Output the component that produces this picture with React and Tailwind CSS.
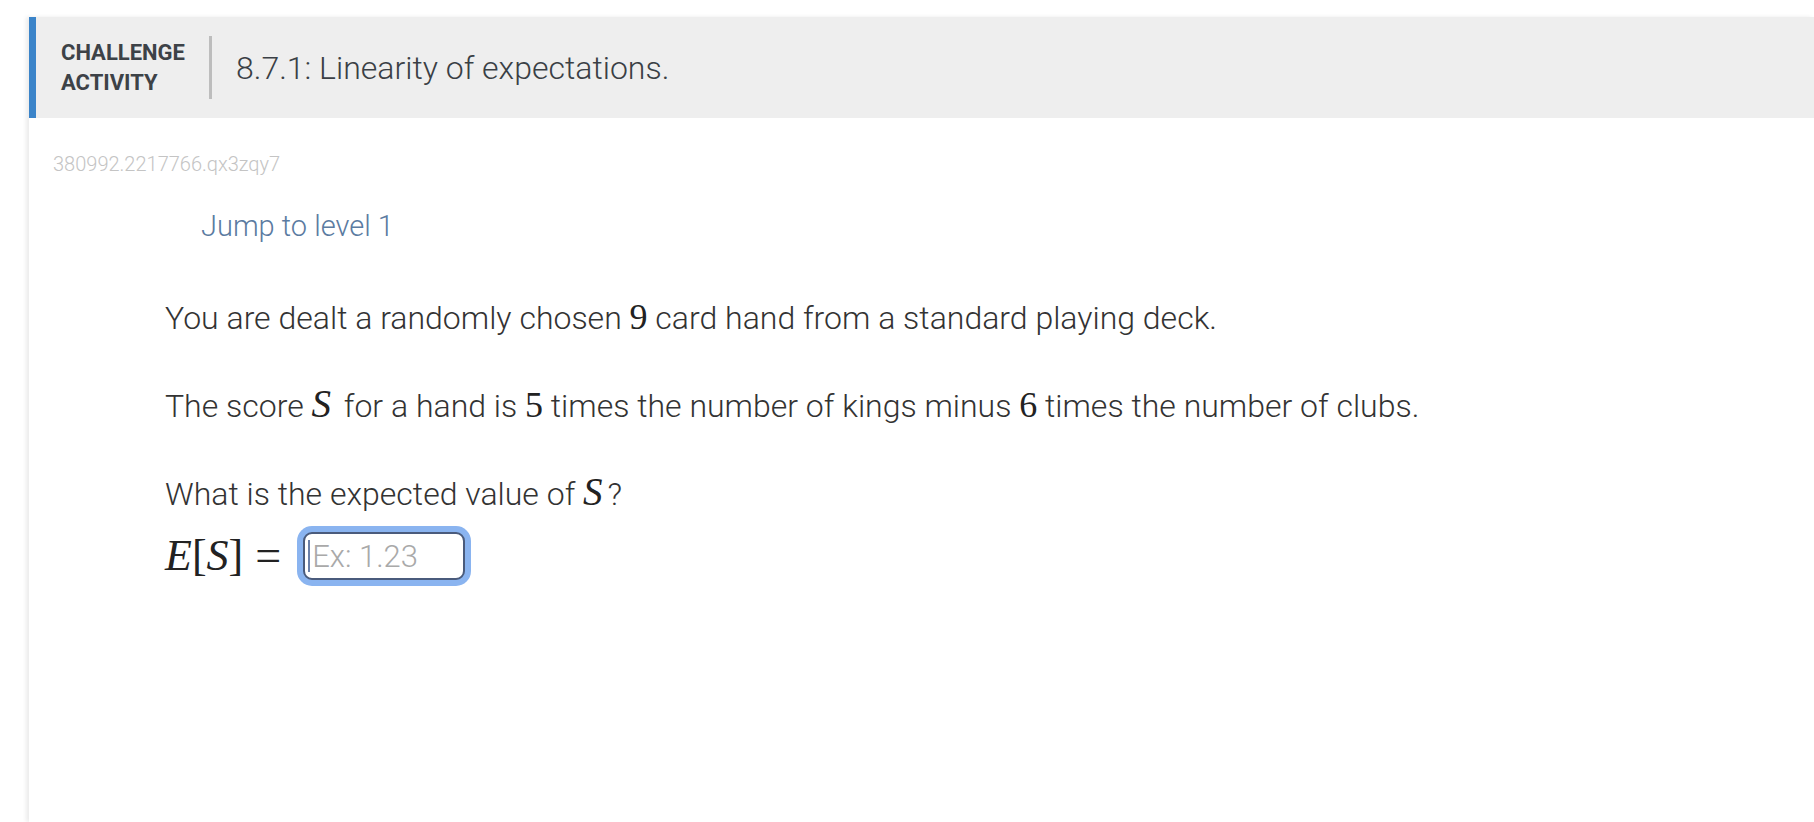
import React from 'react';

const roboto = { fontFamily: 'Roboto, "Liberation Sans", sans-serif' };

const M = ({ children, italic }) => (
  <span
    className={`font-['Liberation_Serif',serif] leading-[10px] text-[#222] ${
      italic ? 'italic text-[39px] pr-[5px]' : 'text-[36px]'
    }`}
  >
    {children}
  </span>
);

const Header = () => (
  <div className="flex items-center h-[101px] bg-[#eeeeee] border-l-[7px] border-[#3b84c9] pl-[25px]">
    <div className="text-[22px] font-bold leading-[30px] text-[#3d4247] uppercase">
      <div>Challenge</div>
      <div>Activity</div>
    </div>
    <div className="w-[3px] h-[63px] bg-[#bdbdbd] ml-[24px] mr-[24px]" />
    <h1 className="text-[32px] font-light text-[#3a3f45]">8.7.1: Linearity of expectations.</h1>
  </div>
);

const App = () => (
  <div className="min-h-[822px] bg-white pt-[17px] pl-[29px]" style={roboto}>
    <div className="min-h-[805px] bg-white shadow-[-3px_0_4px_rgba(0,0,0,0.08)]">
      <Header />
      <div className="pl-[24px] pt-[34px]">
        <div className="text-[20px] font-light text-[#c4c4c4] leading-[24px]">380992.2217766.qx3zqy7</div>
        <div className="ml-[148px] mt-[33px] text-[29px] font-light text-[#5b7ba1] leading-[34px]">Jump to level 1</div>

        <div className="ml-[112px] mt-[53px] text-[32px] font-light text-[#333] leading-[44px]">
          <p>
            You are dealt a randomly chosen <M>9</M> card hand from a standard playing deck.
          </p>
          <p className="mt-[44px]">
            The score <M italic>S</M> for a hand is <M>5</M> times the number of kings minus <M>6</M> times
            the number of clubs.
          </p>
          <p className="mt-[44px]">
            What is the expected value of <M italic>S</M>?
          </p>
          <div className="flex items-center mt-[16px] h-[48px]">
            <span className="font-['Liberation_Serif',serif] text-[44px] leading-[48px] text-[#222]">
              <i>E</i>[<i>S</i>]
            </span>
            <span className="font-['Liberation_Serif',serif] text-[46px] leading-[48px] text-[#222] ml-[12px] mr-[22px]">=</span>
            <div className="relative">
              <input
                readOnly
                placeholder="Ex: 1.23"
                className="block w-[162px] h-[48px] border-2 border-[#4a5b7c] rounded-[9px] ring-[6px] ring-[#8ab4f0] pl-[7px] text-[31px] font-light placeholder:text-[#a9a9a9] outline-none bg-white"
              />
              <span className="absolute left-[5px] top-[8px] w-[2px] h-[32px] bg-[#6a7fa8]" />
            </div>
          </div>
        </div>
      </div>
    </div>
  </div>
);

export default App;
